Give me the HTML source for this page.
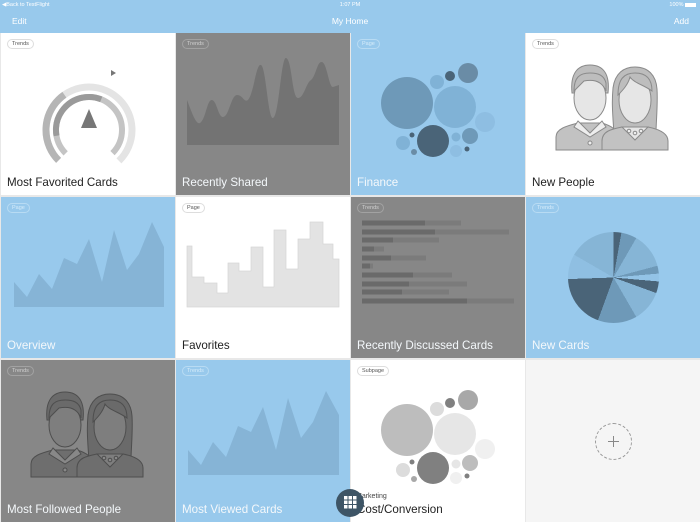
<!DOCTYPE html>
<html><head><meta charset="utf-8"><style>
*{margin:0;padding:0;box-sizing:border-box}
body{width:700px;height:522px;overflow:hidden;background:#e8e8e8;font-family:"Liberation Sans",sans-serif;position:relative}
.bar{position:absolute;left:0;top:0;width:700px;height:33px;background:#98c9ec;color:#fff}
.t{position:absolute;overflow:hidden}
.w{background:#fff}.b{background:#98c9ec}.g{background:#878787}
.pill{position:absolute;left:6px;top:6px;height:10px;padding:0 4px;border-radius:6px;font-size:5.5px;line-height:9px;border:1px solid #ddd;color:#555;background:#fff}
.b .pill{background:transparent;border-color:#b8dbf3;color:#d6ecfa}
.g .pill{background:transparent;border-color:#a2a2a2;color:#d0d0d0}
.ttl{position:absolute;left:6px;bottom:6px;font-size:11.6px;color:#222;white-space:nowrap}
.b .ttl,.g .ttl{color:#f4f8fb}
svg{position:absolute;left:0;top:0}
</style></head><body>
<div class="bar">
<div style="position:absolute;left:2px;top:2px;font-size:5.5px">◀Back to TestFlight</div>
<div style="position:absolute;left:0;width:700px;top:2px;text-align:center;font-size:5.5px">1:07 PM</div>
<div style="position:absolute;right:4px;top:2px;font-size:5.5px">100% <span style="display:inline-block;width:11px;height:4px;background:#fff;vertical-align:middle"></span></div>
<div style="position:absolute;left:12px;top:16px;font-size:8.5px">Edit</div>
<div style="position:absolute;left:0;width:700px;top:16px;text-align:center;font-size:8.5px">My Home</div>
<div style="position:absolute;right:11px;top:16px;font-size:8.5px">Add</div>
</div>

<div class="t w" style="left:1px;top:33px;width:174px;height:162px">
<svg width="174" height="162">
<circle cx="88" cy="97" r="43" fill="none" stroke="#e4e4e4" stroke-width="7" stroke-dasharray="203 70" transform="rotate(135 88 97)"/>
<circle cx="88" cy="97" r="43" fill="none" stroke="#b5b5b5" stroke-width="7" stroke-dasharray="75 300" transform="rotate(135 88 97)"/>
<circle cx="88" cy="97" r="33" fill="none" stroke="#c4c4c4" stroke-width="6" stroke-dasharray="155 52" transform="rotate(135 88 97)"/>
<circle cx="88" cy="97" r="33" fill="none" stroke="#9a9a9a" stroke-width="6" stroke-dasharray="70 300" transform="rotate(170 88 97)"/>
<polygon points="88,76 80,95 96,95" fill="#777"/>
<polygon points="110,37 115,40 110,43" fill="#777"/>
</svg>
<div class="pill">Trends</div><div class="ttl">Most Favorited Cards</div></div>

<div class="t g" style="left:176px;top:33px;width:174px;height:162px">
<svg width="174" height="162"><path d="M11,67 C16,80 20,92 24,90 C30,86 31,66 36,67 C41,68 42,84 47,84 C53,84 55,62 61,62 C67,62 68,70 72,67 C78,60 80,30 85,32 C90,34 92,86 97,85 C103,84 105,24 110,25 C116,26 116,65 122,65 C128,65 130,50 135,47 C140,43 141,28 146,29 C151,30 153,55 157,54 L163,52 L163,112 L11,112 Z" fill="#737373"/></svg>
<div class="pill">Trends</div><div class="ttl">Recently Shared</div></div>

<div class="t b" style="left:351px;top:33px;width:174px;height:162px">
<svg width="174" height="162">
<circle cx="56" cy="70" r="26" fill="#6e99b8"/><circle cx="104" cy="74" r="21" fill="#80b2d6"/><circle cx="82" cy="108" r="16" fill="#4a6478"/>
<circle cx="117" cy="40" r="10" fill="#6a8ca6"/><circle cx="99" cy="43" r="5" fill="#4a6478"/><circle cx="86" cy="49" r="7" fill="#80b2d6"/>
<circle cx="134" cy="89" r="10" fill="#8ebee2"/><circle cx="119" cy="103" r="8" fill="#6e99b8"/><circle cx="52" cy="110" r="7" fill="#80b2d6"/>
<circle cx="105" cy="104" r="4.5" fill="#80b2d6"/><circle cx="105" cy="118" r="6" fill="#8ebee2"/><circle cx="61" cy="102" r="2.5" fill="#4a6478"/>
<circle cx="63" cy="119" r="3" fill="#6a8ca6"/><circle cx="116" cy="116" r="2.5" fill="#4a6478"/></svg>
<div class="pill">Page</div><div class="ttl">Finance</div></div>

<div class="t w" style="left:526px;top:33px;width:174px;height:162px">
<svg width="174" height="162" stroke="#8a8a8a" stroke-width="1">
<path d="M30,117 L30,104 C30,96 40,93 52,90 L76,90 C86,93 92,97 92,106 L92,117 Z" fill="#c2c2c2"/>
<path d="M52,88 L64,100 L76,88 L80,94 L64,104 L48,94 Z" fill="#eee"/>
<circle cx="64" cy="110" r="2" fill="#eee"/>
<path d="M46,60 C44,40 52,32 64,32 C78,32 84,42 82,60 Z" fill="#bdbdbd"/>
<ellipse cx="64" cy="65" rx="16" ry="22" fill="#e6e6e6"/>
<path d="M48,58 C48,44 54,40 64,40 C72,40 78,42 80,50 L80,58 C76,48 68,46 58,48 Z" fill="#bdbdbd"/>
<path d="M88,100 C86,75 86,66 87,55 C89,40 98,34 109,34 C122,34 130,42 131,56 C132,70 130,90 130,100 Z" fill="#bdbdbd"/>
<path d="M76,117 L76,108 C76,98 86,96 96,94 L122,94 C132,96 142,100 142,108 L142,117 Z" fill="#c2c2c2"/>
<path d="M96,94 L109,107 L122,94 Z" fill="#e6e6e6"/>
<ellipse cx="109" cy="67" rx="16" ry="23" fill="#e6e6e6"/>
<path d="M92,62 C92,46 98,40 109,40 C120,40 126,46 126,58 C118,52 108,50 104,44 C102,52 96,58 92,62 Z" fill="#bdbdbd"/>
<circle cx="103" cy="98" r="1.8" fill="#eee"/><circle cx="109" cy="100" r="1.8" fill="#eee"/><circle cx="115" cy="98" r="1.8" fill="#eee"/>
</svg>
<div class="pill">Trends</div><div class="ttl">New People</div></div>

<div class="t b" style="left:1px;top:197px;width:174px;height:161px">
<svg width="174" height="161"><polygon points="13,110 13,85 26,100 38,77 51,92 63,61 76,67 88,42 101,85 113,33 126,73 138,57 151,25 163,50 163,110" fill="#86b4d6"/></svg>
<div class="pill">Page</div><div class="ttl">Overview</div></div>

<div class="t w" style="left:176px;top:197px;width:174px;height:161px">
<svg width="174" height="161"><polygon points="11,110 11,49 16,49 16,80 28,80 28,86 41,86 41,96 52,96 52,66 63,66 63,74 75,74 75,50 87,50 87,90 98,90 98,33 110,33 110,72 122,72 122,42 134,42 134,25 147,25 147,47 157,47 157,62 163,62 163,110" fill="#e3e3e3" stroke="#d6d6d6" stroke-width="0.7"/></svg>
<div class="pill">Page</div><div class="ttl">Favorites</div></div>

<div class="t g" style="left:351px;top:197px;width:174px;height:161px">
<svg width="174" height="161">
<g fill="#7b7b7b"><rect x="11" y="23.5" width="99" height="5"/><rect x="11" y="32.5" width="147" height="5"/><rect x="11" y="40.5" width="77" height="5"/><rect x="11" y="49.5" width="22" height="5"/><rect x="11" y="58.5" width="64" height="5"/><rect x="11" y="66.5" width="11" height="5"/><rect x="11" y="75.5" width="90" height="5"/><rect x="11" y="84.5" width="105" height="5"/><rect x="11" y="92.5" width="87" height="5"/><rect x="11" y="101.5" width="152" height="5"/></g>
<g fill="#6a6a6a"><rect x="11" y="23.5" width="63" height="5"/><rect x="11" y="32.5" width="73" height="5"/><rect x="11" y="40.5" width="31" height="5"/><rect x="11" y="49.5" width="12" height="5"/><rect x="11" y="58.5" width="29" height="5"/><rect x="11" y="66.5" width="8" height="5"/><rect x="11" y="75.5" width="51" height="5"/><rect x="11" y="84.5" width="47" height="5"/><rect x="11" y="92.5" width="40" height="5"/><rect x="11" y="101.5" width="105" height="5"/></g>
</svg>
<div class="pill">Trends</div><div class="ttl">Recently Discussed Cards</div></div>

<div class="t b" style="left:526px;top:197px;width:174px;height:161px">
<div style="position:absolute;left:42px;top:35px;width:91px;height:91px;border-radius:50%;background:conic-gradient(#4a6478 0 10deg,#6e99b8 10deg 30deg,#86b5d6 30deg 75deg,#6e99b8 75deg 85deg,#93c3e6 85deg 95deg,#4a6478 95deg 110deg,#86b5d6 110deg 150deg,#6e99b8 150deg 200deg,#4a6478 200deg 268deg,#8fbfe2 268deg 300deg,#86b5d6 300deg 360deg)"></div>
<div class="pill">Trends</div><div class="ttl">New Cards</div></div>

<div class="t g" style="left:1px;top:360px;width:174px;height:162px">
<svg width="174" height="162" stroke="#4e4e4e" stroke-width="1">
<path d="M30,117 L30,104 C30,96 40,93 52,90 L76,90 C86,93 92,97 92,106 L92,117 Z" fill="#6e6e6e"/>
<path d="M52,88 L64,100 L76,88 L80,94 L64,104 L48,94 Z" fill="#888"/>
<circle cx="64" cy="110" r="2" fill="#888"/>
<path d="M46,60 C44,40 52,32 64,32 C78,32 84,42 82,60 Z" fill="#6a6a6a"/>
<ellipse cx="64" cy="65" rx="16" ry="22" fill="#7e7e7e"/>
<path d="M48,58 C48,44 54,40 64,40 C72,40 78,42 80,50 L80,58 C76,48 68,46 58,48 Z" fill="#6a6a6a"/>
<path d="M88,100 C86,75 86,66 87,55 C89,40 98,34 109,34 C122,34 130,42 131,56 C132,70 130,90 130,100 Z" fill="#6a6a6a"/>
<path d="M76,117 L76,108 C76,98 86,96 96,94 L122,94 C132,96 142,100 142,108 L142,117 Z" fill="#6e6e6e"/>
<path d="M96,94 L109,107 L122,94 Z" fill="#7e7e7e"/>
<ellipse cx="109" cy="67" rx="16" ry="23" fill="#7e7e7e"/>
<path d="M92,62 C92,46 98,40 109,40 C120,40 126,46 126,58 C118,52 108,50 104,44 C102,52 96,58 92,62 Z" fill="#6a6a6a"/>
<circle cx="103" cy="98" r="1.8" fill="#888"/><circle cx="109" cy="100" r="1.8" fill="#888"/><circle cx="115" cy="98" r="1.8" fill="#888"/>
</svg>
<div class="pill">Trends</div><div class="ttl">Most Followed People</div></div>

<div class="t b" style="left:176px;top:360px;width:174px;height:162px">
<svg width="174" height="162"><polygon points="12,115 12,90 25,105 37,82 50,97 62,66 75,72 87,47 100,90 112,38 125,78 137,62 150,31 163,55 163,115" fill="#86b4d6"/></svg>
<div class="pill">Trends</div><div class="ttl">Most Viewed Cards</div></div>

<div class="t w" style="left:351px;top:360px;width:174px;height:162px">
<svg width="174" height="162">
<circle cx="56" cy="70" r="26" fill="#bdbdbd"/><circle cx="104" cy="74" r="21" fill="#e6e6e6"/><circle cx="82" cy="108" r="16" fill="#808080"/>
<circle cx="117" cy="40" r="10" fill="#a8a8a8"/><circle cx="99" cy="43" r="5" fill="#808080"/><circle cx="86" cy="49" r="7" fill="#dcdcdc"/>
<circle cx="134" cy="89" r="10" fill="#f0f0f0"/><circle cx="119" cy="103" r="8" fill="#bdbdbd"/><circle cx="52" cy="110" r="7" fill="#dcdcdc"/>
<circle cx="105" cy="104" r="4.5" fill="#e6e6e6"/><circle cx="105" cy="118" r="6" fill="#f0f0f0"/><circle cx="61" cy="102" r="2.5" fill="#808080"/>
<circle cx="63" cy="119" r="3" fill="#a8a8a8"/><circle cx="116" cy="116" r="2.5" fill="#808080"/></svg>
<div class="pill">Subpage</div>
<div style="position:absolute;left:5px;bottom:22px;font-size:7px;color:#444">Marketing</div>
<div class="ttl">Cost/Conversion</div></div>

<div class="t" style="left:526px;top:360px;width:174px;height:162px;background:#f5f5f5">
<div style="position:absolute;left:69px;top:63px;width:37px;height:37px;border-radius:50%;border:1px dashed #999"></div>
<div style="position:absolute;left:82px;top:81px;width:11px;height:1px;background:#888"></div>
<div style="position:absolute;left:87px;top:76px;width:1px;height:11px;background:#888"></div>
</div>

<div style="position:absolute;left:336px;top:489px;width:28px;height:28px;border-radius:50%;background:#3e5566"></div>
<svg width="700" height="522" style="position:absolute;left:0;top:0"><g fill="#fff">
<rect x="344" y="496" width="3.5" height="3.5"/><rect x="348.5" y="496" width="3.5" height="3.5"/><rect x="353" y="496" width="3.5" height="3.5"/>
<rect x="344" y="500.5" width="3.5" height="3.5"/><rect x="348.5" y="500.5" width="3.5" height="3.5"/><rect x="353" y="500.5" width="3.5" height="3.5"/>
<rect x="344" y="505" width="3.5" height="3.5"/><rect x="348.5" y="505" width="3.5" height="3.5"/><rect x="353" y="505" width="3.5" height="3.5"/></g></svg>
</body></html>
